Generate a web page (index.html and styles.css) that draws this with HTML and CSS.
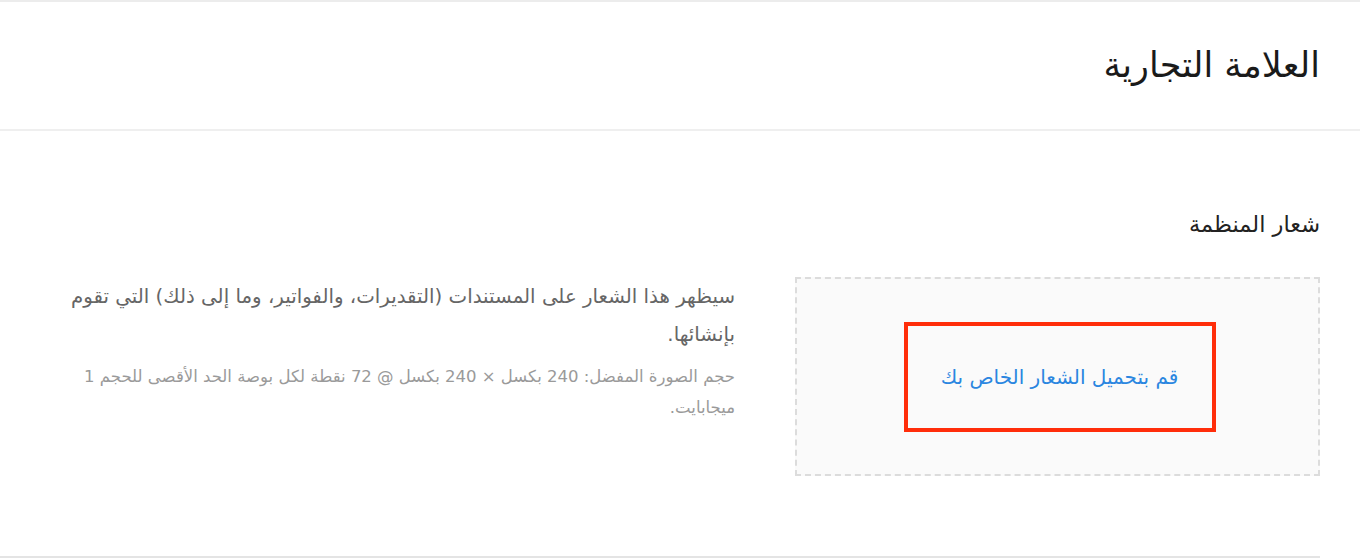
FILE: index.html
```html
<!DOCTYPE html>
<html lang="ar" dir="rtl">
<head>
<meta charset="utf-8">
<link rel="stylesheet" href="styles.css">
</head>
<body>
<div class="page">
  <header class="header">
    <h1 class="title">العلامة التجارية</h1>
  </header>
  <section class="section">
    <h2 class="label">شعار المنظمة</h2>
    <div class="row">
      <div class="dropzone">
        <div class="highlight">
          <a class="upload" href="#">قم بتحميل الشعار الخاص بك</a>
        </div>
      </div>
      <div class="info">
        <p class="desc">سيظهر هذا الشعار على المستندات (التقديرات، والفواتير، وما إلى ذلك) التي تقوم بإنشائها.</p>
        <p class="hint">حجم الصورة المفضل: 240 بكسل × 240 بكسل @ 72 نقطة لكل بوصة الحد الأقصى للحجم 1 ميجابايت.</p>
      </div>
    </div>
  </section>
  <div class="divider"></div>
</div>
</body>
</html>
```

FILE: styles.css
```css
* { box-sizing: border-box; }
html, body {
  margin: 0;
  padding: 0;
  background: #fff;
}
body {
  font-family: "DejaVu Sans", "Liberation Sans", sans-serif;
  color: #222;
  direction: rtl;
}
.page {
  width: 1360px;
  height: 558px;
  overflow: hidden;
  border-top: 2px solid #ececec;
}
.header {
  height: 129px;
  border-bottom: 2px solid #efefef;
  display: flex;
  align-items: center;
  padding: 0 40px 2px 40px;
}
.title {
  margin: 0;
  font-size: 35px;
  font-weight: normal;
  color: #1a1a1a;
}
.section {
  padding: 78px 40px 0 40px;
  height: 425px;
}
.label {
  margin: 0 0 38px 0;
  font-size: 22.5px;
  font-weight: normal;
  color: #222;
  line-height: 30px;
}
.row {
  display: flex;
  gap: 60px;
  align-items: flex-start;
}
.dropzone {
  width: 525px;
  height: 199px;
  flex: none;
  background: #fafafa;
  border: 2px dashed #dcdcdc;
  display: flex;
  align-items: center;
  justify-content: center;
}
.highlight {
  width: 312px;
  height: 110px;
  margin-left: 4px;
  border: 4px solid #ff2d0a;
  display: flex;
  align-items: center;
  justify-content: center;
}
.upload {
  color: #2a86e0;
  text-decoration: none;
  font-size: 20px;
}
.info {
  flex: 1;
  padding-left: 24px;
}
.desc {
  margin: 1px 0 0 0;
  font-size: 19.8px;
  line-height: 38px;
  color: #666;
}
.hint {
  margin: 7px 0 0 0;
  font-size: 16.5px;
  line-height: 31px;
  color: #9a9a9a;
}
.divider {
  height: 2px;
  background: #e4e4e4;
  margin-right: 40px;
}
```
